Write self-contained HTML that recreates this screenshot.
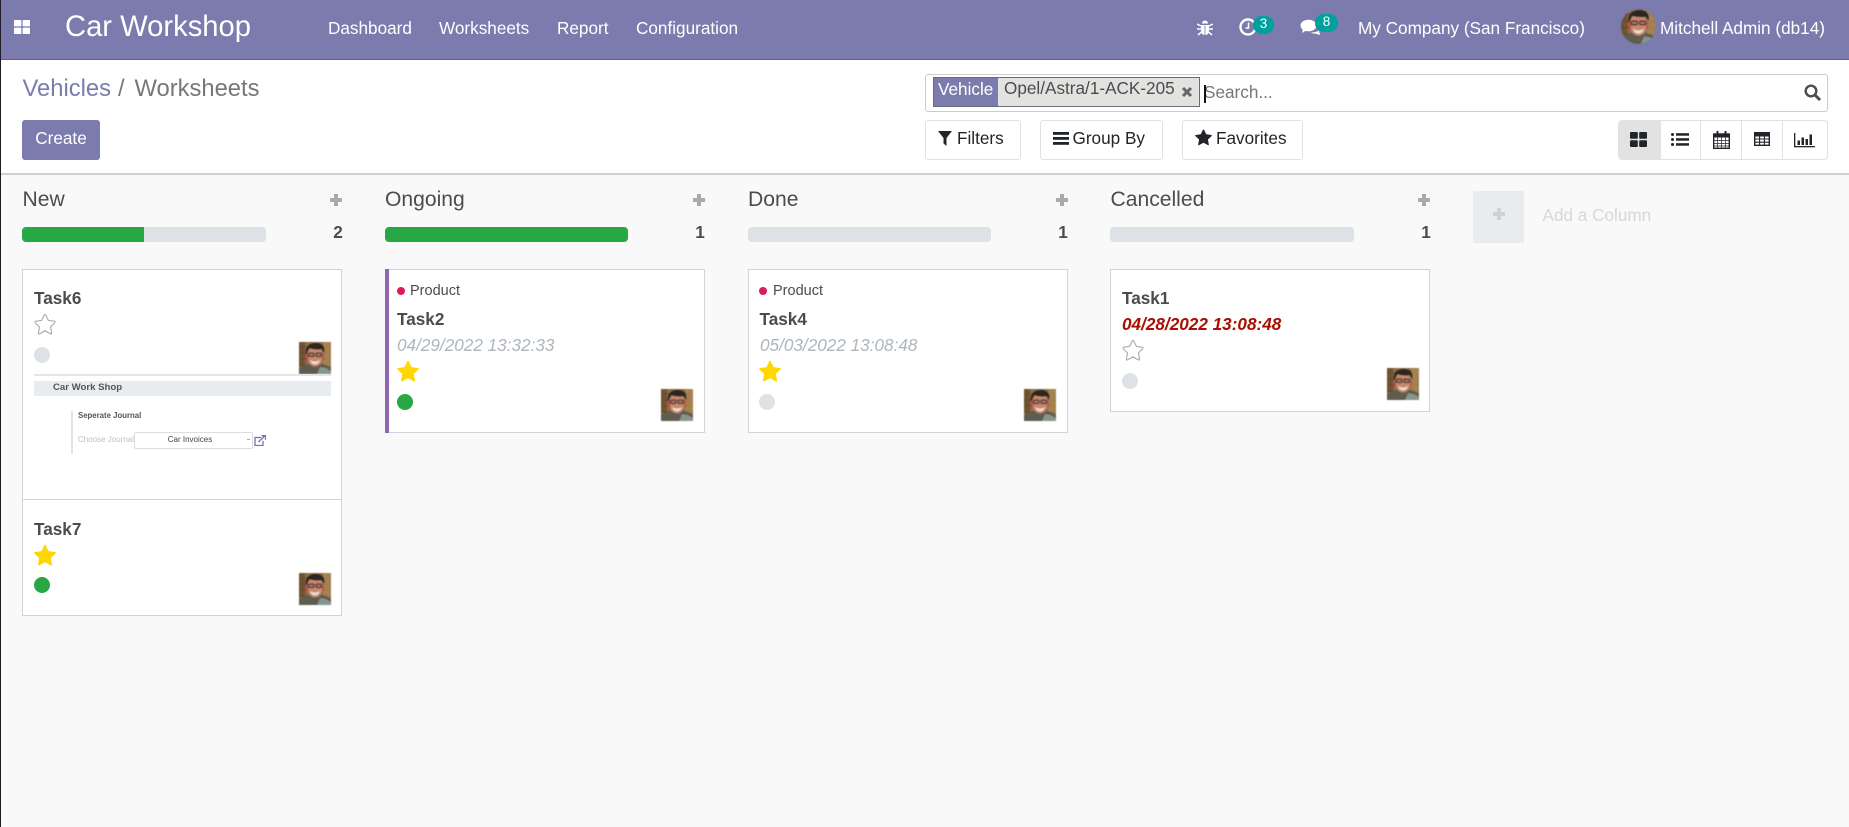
<!DOCTYPE html>
<html><head><meta charset="utf-8"><title>Car Workshop</title>
<style>
html,body{margin:0;padding:0;width:1849px;height:827px;overflow:hidden;background:#f9f9f9;font-family:"Liberation Sans",sans-serif;color:#4c4c4c}
.a,.t,svg.i{position:absolute}
.t{white-space:nowrap;line-height:24px;height:24px}
.nav{color:#fff;font-size:17.16px}
.box{position:absolute;box-sizing:border-box;background:#fff;border:1px solid #ced4da}
.btn{position:absolute;box-sizing:border-box;background:#fff;border:1px solid #dee2e6;border-radius:3px;top:120px;height:40px}
.col{font-size:21.1px;color:#4c4c4c}
.plus{position:absolute;width:12px;height:12px;background:linear-gradient(#aaa,#aaa) 0 4px/12px 4px no-repeat,linear-gradient(#aaa,#aaa) 4px 0/4px 12px no-repeat}
.bar{position:absolute;top:227px;height:15px;background:#dee2e6;border-radius:4px;overflow:hidden}
.bar i{display:block;height:15px;background:#28a745}
.cnt{font-size:17.16px;font-weight:bold;color:#4c4c4c;width:20px;text-align:center}
.ttl{font-size:17.16px;font-weight:bold;color:#4c4c4c}
.date{font-size:17.16px;font-style:italic;color:#adb5bd}
.dot{position:absolute;width:16px;height:16px;border-radius:50%;background:#dee2e6}
.g{background:#28a745}
.pd{position:absolute;width:8px;height:8px;border-radius:50%;background:#dc1a5e}
.prod{font-size:14.5px;color:#4c4c4c}
.bl{filter:blur(.3px)}
.ph{filter:blur(.45px)}
</style></head><body>
<svg width="0" height="0" style="position:absolute"><defs>
<symbol id="av" viewBox="0 0 32 32">
<rect width="32" height="32" fill="#8d6c41"/>
<path d="M0 5h32M0 11h32M0 17h32M0 23h32" stroke="#6f5231" stroke-width="1"/>
<rect x="24" width="8" height="24" fill="#ad8a55" opacity=".75"/>
<rect y="0" width="6" height="24" fill="#5c4229" opacity=".6"/>
<path d="M0 32v-6q4-3 10-4l6 2 7-2q6 1 9 5v5z" fill="#5f5c50"/>
<path d="M18 32l3-7 6 1 5 3v3z" fill="#87958f"/>
<ellipse cx="16" cy="14.500" rx="8" ry="10" fill="#c7876c"/>
<rect x="7" y="12" width="2" height="7" fill="#c0484a"/>
<rect x="23" y="12" width="2" height="6" fill="#b5584e"/>
<path d="M7 13q-2-11 9-12 11 0 9 10l-2-4q-7 1-13-1z" fill="#2d2522"/>
<rect x="9.500" y="11" width="5.500" height="3.500" rx="1" fill="#a9705f" stroke="#2b2424" stroke-width=".8"/>
<rect x="17" y="11" width="5.500" height="3.500" rx="1" fill="#a9705f" stroke="#2b2424" stroke-width=".8"/>
<path d="M11 18q5 3 10 0q-1 4.500-5 4.500t-5-4.500z" fill="#eadcd6"/>
</symbol>
<symbol id="st" viewBox="0 0 1664 1792"><path d="M1664 647q0 22-26 48l-363 354 86 500q1 7 1 20 0 21-10.500 35.500t-30.500 14.500q-19 0-40-12l-449-236-449 236q-22 12-40 12-21 0-31.500-14.500t-10.500-35.500q0-6 2-20l86-500-364-354q-25-27-25-48 0-37 56-46l502-73 225-455q19-41 49-41t49 41l225 455 502 73q56 9 56 46z"/></symbol>
</defs></svg>

<!-- navbar -->
<div class="a" style="left:0;top:0;width:1849px;height:60px;background:#7c7bad;border-bottom:1px solid #5f5e97;box-sizing:border-box"></div>
<svg class="i" style="left:14px;top:20px" width="16" height="14" viewBox="0 0 16 14" fill="#fff"><rect width="7.400" height="6.400" rx=".8"/><rect x="8.600" width="7.400" height="6.400" rx=".8"/><rect y="7.600" width="7.400" height="6.400" rx=".8"/><rect x="8.600" y="7.600" width="7.400" height="6.400" rx=".8"/></svg>
<div class="t nav" style="left:65px;top:15px;font-size:29.2px">Car Workshop</div>
<div class="t nav" style="left:328px;top:16px">Dashboard</div>
<div class="t nav" style="left:439px;top:16px">Worksheets</div>
<div class="t nav" style="left:557px;top:16px">Report</div>
<div class="t nav" style="left:636px;top:16px">Configuration</div>
<svg class="i" style="left:1197px;top:20px" width="16" height="16" viewBox="0 0 16 16" fill="#fff"><path d="M5 3.500a3 3 0 0 1 6 0z"/><path d="M4 5h8v5q0 5-4 5t-4-5z"/><path d="M0 4l4 2M16 4l-4 2M0 9h4M16 9h-4M1 15l3.500-3M15 15l-3.500-3" stroke="#fff" stroke-width="1.500" fill="none"/><path d="M7.600 5.500h.8V15h-.8z" fill="#7c7bad"/></svg>
<svg class="i" style="left:1238px;top:17px" width="20" height="20" viewBox="0 0 20 20" fill="none" stroke="#fff"><circle cx="10" cy="10" r="7.500" stroke-width="2.400"/><path d="M10.500 5.500V11H7.500" stroke-width="1.500"/></svg>
<div class="a" style="left:1253px;top:16px;width:21px;height:17.500px;border-radius:9px;background:#00a09d"></div>
<div class="t" style="left:1253px;top:12px;width:21px;text-align:center;color:#fff;font-size:13.500px">3</div>
<svg class="i" style="left:1300px;top:19px" width="21" height="17" viewBox="0 0 21 17" fill="#fff"><ellipse cx="8.500" cy="6.500" rx="8" ry="5.800"/><path d="M3 10l-1 4 5-3z"/><path d="M11 13.500q5 0 8-2l1 4.500-5-1.500q-2 .5-4-1z"/></svg>
<div class="a" style="left:1315px;top:14px;width:23px;height:17.500px;border-radius:9px;background:#00a09d"></div>
<div class="t" style="left:1315px;top:10px;width:23px;text-align:center;color:#fff;font-size:13.500px">8</div>
<div class="t nav" style="left:1358px;top:16px">My Company (San Francisco)</div>
<svg class="i ph" style="left:1621px;top:9px;border-radius:50%" width="35" height="35"><use href="#av"/></svg>
<div class="t nav" style="left:1660px;top:16px">Mitchell Admin (db14)</div>

<!-- control panel -->
<div class="a" style="left:0;top:60px;width:1849px;height:115px;background:#fff;border-bottom:2px solid #d0d0d0;box-sizing:border-box"></div>
<div class="t" style="left:22.500px;top:77px;font-size:23.760px;color:#7c7bad">Vehicles</div>
<div class="t" style="left:118px;top:77px;font-size:23.760px;color:#777">/</div>
<div class="t" style="left:134.500px;top:77px;font-size:23.760px;color:#777">Worksheets</div>
<div class="a" style="left:22px;top:120px;width:78px;height:40px;background:#7c7bad;border-radius:3px"></div>
<div class="t" style="left:22px;top:126px;width:78px;text-align:center;color:#fff;font-size:17.160px">Create</div>

<div class="a" style="left:925px;top:74px;width:903px;height:38px;box-sizing:border-box;border:1px solid #ccc;border-radius:3px;background:#fff"></div>
<div class="a" style="left:933px;top:77px;width:267px;height:30px;box-sizing:border-box;border:1px solid #666e7a;background:#e2e2e0"></div>
<div class="a" style="left:934px;top:78px;width:64px;height:28px;background:#7c7bad"></div>
<div class="t" style="left:938px;top:77px;color:#fff;font-size:17.160px">Vehicle</div>
<div class="t" style="left:1004px;top:76px;color:#4c4c4c;font-size:17.160px">Opel/Astra/1-ACK-205</div>
<svg class="i" style="left:1181px;top:86px" width="12" height="12" viewBox="0 0 12 12"><path d="M2 2l8 8M10 2l-8 8" stroke="#666" stroke-width="3"/></svg>
<div class="t" style="left:1204px;top:80px;color:#777;font-size:17.160px">Search...</div>
<div class="a" style="left:1204px;top:85px;width:1.500px;height:18px;background:#111"></div>
<svg class="i" style="left:1804px;top:84px" width="17" height="17" viewBox="0 0 17 17" fill="none" stroke="#4c4c4c"><circle cx="7" cy="7" r="5.300" stroke-width="2.400"/><path d="M11 11l5 5" stroke-width="3"/></svg>

<div class="btn" style="left:925px;width:96px"></div>
<svg class="i" style="left:938px;top:131px" width="14" height="15" viewBox="0 0 14 15" fill="#212529"><path d="M0 0h14L8.500 7v8L5.500 12.500V7z"/></svg>
<div class="t" style="left:957px;top:126px;font-size:17.160px;color:#212529">Filters</div>
<div class="btn" style="left:1040px;width:123px"></div>
<svg class="i" style="left:1053px;top:132px" width="16" height="13" viewBox="0 0 16 13" fill="#212529"><rect width="16" height="2.800"/><rect y="5" width="16" height="2.800"/><rect y="10" width="16" height="2.800"/></svg>
<div class="t" style="left:1072.500px;top:126px;font-size:17.160px;color:#212529">Group By</div>
<div class="btn" style="left:1182px;width:121px"></div>
<svg class="i" style="left:1195px;top:129px;fill:#212529" width="17" height="18"><use href="#st"/></svg>
<div class="t" style="left:1216px;top:126px;font-size:17.160px;color:#212529">Favorites</div>

<div class="a" style="left:1618px;top:120px;width:210px;height:40px;box-sizing:border-box;border:1px solid #dee2e6;border-radius:4px;background:#fff"></div>
<div class="a" style="left:1619px;top:121px;width:41px;height:38px;background:#e2e2e2;border-radius:3px 0 0 3px"></div>
<div class="a" style="left:1700px;top:121px;width:1px;height:38px;background:#dee2e6"></div>
<div class="a" style="left:1741px;top:121px;width:1px;height:38px;background:#dee2e6"></div>
<div class="a" style="left:1782px;top:121px;width:1px;height:38px;background:#dee2e6"></div>
<div class="a" style="left:1660px;top:121px;width:1px;height:38px;background:#dee2e6"></div>
<svg class="i" style="left:1630px;top:132px" width="17" height="15" viewBox="0 0 17 15" fill="#212529"><rect width="7.800" height="6.800" rx="1"/><rect x="9.200" width="7.800" height="6.800" rx="1"/><rect y="8.200" width="7.800" height="6.800" rx="1"/><rect x="9.200" y="8.200" width="7.800" height="6.800" rx="1"/></svg>
<svg class="i" style="left:1671px;top:133px" width="18" height="13" viewBox="0 0 18 13" fill="#212529"><circle cx="1.500" cy="1.500" r="1.500"/><circle cx="1.500" cy="6.500" r="1.500"/><circle cx="1.500" cy="11.500" r="1.500"/><rect x="5" y=".2" width="13" height="2.500"/><rect x="5" y="5.200" width="13" height="2.500"/><rect x="5" y="10.200" width="13" height="2.500"/></svg>
<svg class="i" style="left:1713px;top:131px" width="17" height="18" viewBox="0 0 17 18" fill="none" stroke="#212529"><rect x=".7" y="3" width="15.600" height="14.300" stroke-width="1.400"/><rect x="1" y="3" width="15" height="3" fill="#212529"/><path d="M1 9.500h15M1 12.500h15M1 15h15M4.500 6v11M8.500 6v11M12.500 6v11" stroke-width=".7"/><path d="M4.500 0v4M12.500 0v4" stroke-width="2"/></svg>
<svg class="i" style="left:1754px;top:132px" width="16" height="14" viewBox="0 0 16 14" fill="none" stroke="#212529"><rect x=".7" y=".7" width="14.600" height="12.600" stroke-width="1.400"/><rect x="1" y="1" width="14" height="3" fill="#212529"/><path d="M1 7h14M1 10.200h14M5.600 4v9M10.400 4v9" stroke-width="1.100"/></svg>
<svg class="i" style="left:1794px;top:133px" width="21" height="15" viewBox="0 0 21 15" fill="#212529"><rect x="0" width="1.300" height="14"/><rect y="13" width="21" height="1.300"/><rect x="3.500" y="7.500" width="2.500" height="4.500"/><rect x="7.500" y="4.500" width="2.500" height="7.500"/><rect x="11.500" y="6" width="2.500" height="6"/><rect x="15.500" y="1.500" width="2.500" height="10.500"/></svg>

<!-- column headers -->
<div class="t col" style="left:22.500px;top:188px">New</div>
<div class="plus" style="left:330px;top:194px"></div>
<div class="bar" style="left:22px;width:244px"><i style="width:122px"></i></div>
<div class="t cnt" style="left:328px;top:220px">2</div>

<div class="t col" style="left:385px;top:188px">Ongoing</div>
<div class="plus" style="left:693px;top:194px"></div>
<div class="bar" style="left:385px;width:243px"><i style="width:243px"></i></div>
<div class="t cnt" style="left:690px;top:220px">1</div>

<div class="t col" style="left:748px;top:188px">Done</div>
<div class="plus" style="left:1056px;top:194px"></div>
<div class="bar" style="left:748px;width:243px"></div>
<div class="t cnt" style="left:1053px;top:220px">1</div>

<div class="t col" style="left:1110.500px;top:188px">Cancelled</div>
<div class="plus" style="left:1418px;top:194px"></div>
<div class="bar" style="left:1110px;width:244px"></div>
<div class="t cnt" style="left:1416px;top:220px">1</div>

<div class="a" style="left:1473px;top:191px;width:51px;height:52px;background:#e9ecef"></div>
<div class="plus" style="left:1493px;top:208px;background:linear-gradient(#ced2d6,#ced2d6) 0 4px/12px 4px no-repeat,linear-gradient(#ced2d6,#ced2d6) 4px 0/4px 12px no-repeat"></div>
<div class="t" style="left:1542.500px;top:203px;font-size:17.160px;color:#d5d8db">Add a Column</div>

<!-- cards col 1 -->
<div class="box" style="left:22px;top:269px;width:320px;height:231px"></div>
<div class="box" style="left:22px;top:499px;width:320px;height:117px"></div>
<div class="t ttl" style="left:34px;top:286px">Task6</div>
<svg class="i" style="left:34px;top:314px;fill:#fff;stroke:#aaa;stroke-width:90" width="22" height="22" viewBox="-50 100 1764 1592"><use href="#st" width="1664" height="1792"/></svg>
<div class="dot" style="left:34px;top:347px"></div>
<svg class="i ph" style="left:299px;top:342px" width="32" height="32"><use href="#av"/></svg>
<div class="a bl" style="left:34px;top:374px;width:297px;height:2px;background:#e5e5e5"></div>
<div class="a bl" style="left:34px;top:381px;width:297px;height:15px;background:#e9ecef"></div>
<div class="t bl" style="left:53px;top:376px;font-size:9.600px;font-weight:bold;color:#555">Car Work Shop</div>
<div class="a bl" style="left:71px;top:411px;width:2px;height:43px;background:#e3e3e3"></div>
<div class="t bl" style="left:78px;top:404px;font-size:7.800px;font-weight:bold;color:#555">Seperate Journal</div>
<div class="t bl" style="left:78px;top:428px;font-size:8px;color:#c0c0c0">Choose Journal</div>
<div class="a bl" style="left:134px;top:432px;width:119px;height:17px;box-sizing:border-box;border:1px solid #ddd;border-radius:2px;background:#fff"></div>
<div class="t bl" style="left:134px;top:428px;width:112px;text-align:center;font-size:8px;color:#444">Car Invoices</div>
<div class="a bl" style="left:247px;top:439px;width:3px;height:1px;background:#aaa"></div>
<svg class="i bl" style="left:254px;top:435px" width="12" height="11" viewBox="0 0 12 11" fill="none" stroke="#7c6cb0" stroke-width="1.300"><path d="M7 2.500H1v8h8V6"/><path d="M4.500 7L10.500 1M7.500.7h4v4" /></svg>

<div class="t ttl" style="left:34px;top:517px">Task7</div>
<svg class="i" style="left:34px;top:544px;fill:#ffd700" width="22" height="24"><use href="#st"/></svg>
<div class="dot g" style="left:34px;top:577px"></div>
<svg class="i ph" style="left:299px;top:573px" width="32" height="32"><use href="#av"/></svg>

<!-- Task2 -->
<div class="box" style="left:385px;top:269px;width:320px;height:164px"></div>
<div class="a" style="left:385px;top:269px;width:4px;height:164px;background:#9065b0"></div>
<div class="pd" style="left:397px;top:287px"></div>
<div class="t prod" style="left:410px;top:279px">Product</div>
<div class="t ttl" style="left:397px;top:307px">Task2</div>
<div class="t date" style="left:397px;top:333px">04/29/2022 13:32:33</div>
<svg class="i" style="left:397px;top:360px;fill:#ffd700" width="22" height="24"><use href="#st"/></svg>
<div class="dot g" style="left:397px;top:394px"></div>
<svg class="i ph" style="left:661px;top:389px" width="32" height="32"><use href="#av"/></svg>

<!-- Task4 -->
<div class="box" style="left:748px;top:269px;width:320px;height:164px"></div>
<div class="pd" style="left:759px;top:287px"></div>
<div class="t prod" style="left:773px;top:279px">Product</div>
<div class="t ttl" style="left:759.500px;top:307px">Task4</div>
<div class="t date" style="left:760px;top:333px">05/03/2022 13:08:48</div>
<svg class="i" style="left:759px;top:360px;fill:#ffd700" width="22" height="24"><use href="#st"/></svg>
<div class="dot" style="left:759px;top:394px"></div>
<svg class="i ph" style="left:1024px;top:389px" width="32" height="32"><use href="#av"/></svg>

<!-- Task1 -->
<div class="box" style="left:1110px;top:269px;width:320px;height:143px"></div>
<div class="t ttl" style="left:1122px;top:286px">Task1</div>
<div class="t date" style="left:1122px;top:312px;color:#a80f00;font-weight:bold">04/28/2022 13:08:48</div>
<svg class="i" style="left:1122px;top:340px;fill:#fff;stroke:#aaa;stroke-width:90" width="22" height="22" viewBox="-50 100 1764 1592"><use href="#st" width="1664" height="1792"/></svg>
<div class="dot" style="left:1122px;top:373px"></div>
<svg class="i ph" style="left:1387px;top:368px" width="32" height="32"><use href="#av"/></svg>

<div class="a" style="left:0;top:0;width:1px;height:827px;background:#1f1a24"></div>
</body></html>
